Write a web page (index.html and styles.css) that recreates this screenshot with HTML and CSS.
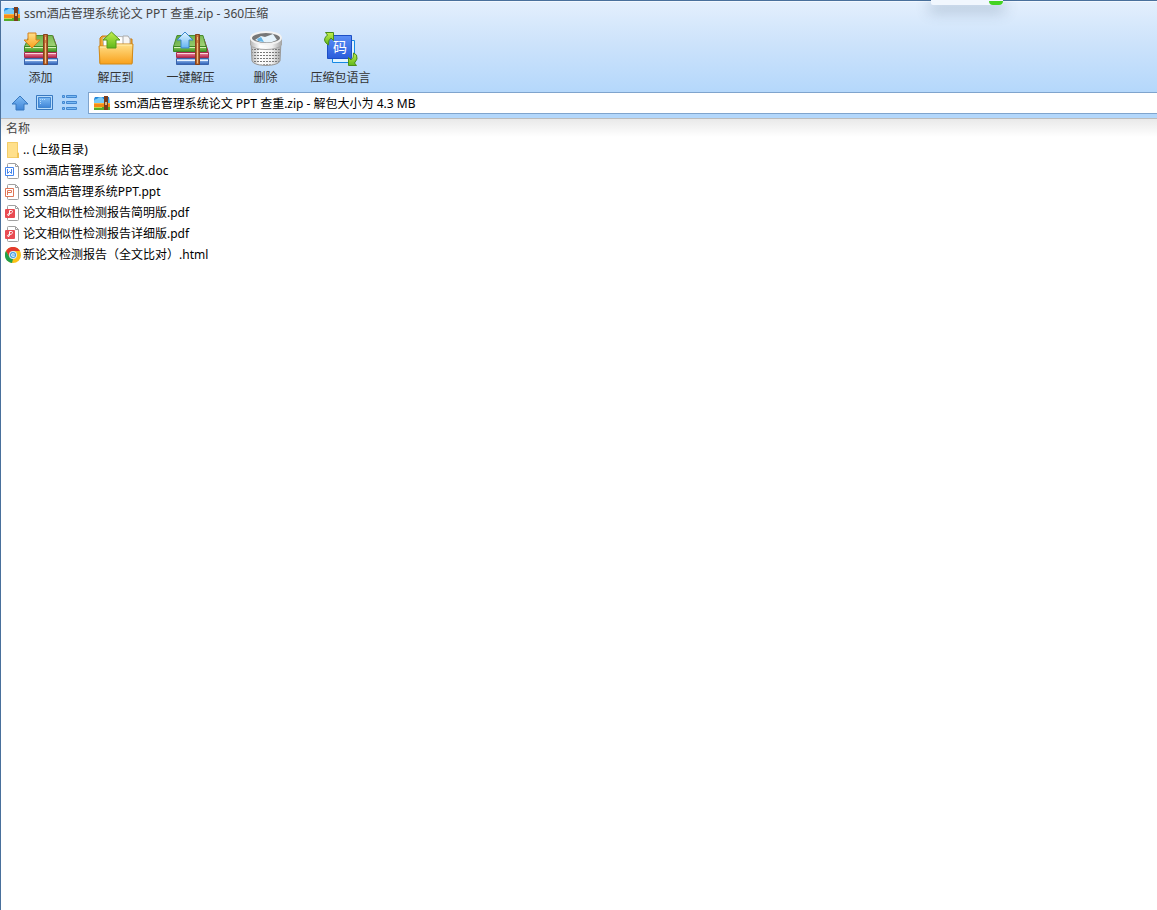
FILE: index.html
```html
<!DOCTYPE html>
<html lang="zh-CN">
<head>
<meta charset="utf-8">
<title>ssm酒店管理系统论文 PPT 查重.zip - 360压缩</title>
<link rel="stylesheet" href="styles.css">
</head>
<body>
<svg class="defs" width="0" height="0" aria-hidden="true">
  <defs>
    <linearGradient id="green" x1="0" y1="0" x2="0" y2="1"><stop offset="0" stop-color="#8cc95c"/><stop offset="1" stop-color="#3f9526"/></linearGradient>
    <linearGradient id="greentop" x1="0" y1="0" x2="1" y2="1"><stop offset="0" stop-color="#5ba53b"/><stop offset="1" stop-color="#a5d67a"/></linearGradient>
    <linearGradient id="red" x1="0" y1="0" x2="0" y2="1"><stop offset="0" stop-color="#f39aae"/><stop offset="1" stop-color="#b62248"/></linearGradient>
    <linearGradient id="blue" x1="0" y1="0" x2="0" y2="1"><stop offset="0" stop-color="#b9d8fb"/><stop offset="1" stop-color="#2459b4"/></linearGradient>
    <linearGradient id="strap" x1="0" y1="0" x2="1" y2="0"><stop offset="0" stop-color="#8c3f16"/><stop offset="0.5" stop-color="#d98645"/><stop offset="1" stop-color="#8c3f16"/></linearGradient>
    <linearGradient id="orange" x1="0" y1="0" x2="0" y2="1"><stop offset="0" stop-color="#ffe08a"/><stop offset="1" stop-color="#f9a11b"/></linearGradient>
    <linearGradient id="lime" x1="0" y1="0" x2="0" y2="1"><stop offset="0" stop-color="#c3ee4e"/><stop offset="1" stop-color="#5fb81a"/></linearGradient>
    <linearGradient id="sky" x1="0" y1="0" x2="0" y2="1"><stop offset="0" stop-color="#e6f6ff"/><stop offset="1" stop-color="#63b4f4"/></linearGradient>
    <linearGradient id="tile" x1="0" y1="0" x2="0" y2="1"><stop offset="0" stop-color="#5c8ff6"/><stop offset="1" stop-color="#2a5ddb"/></linearGradient>
    <linearGradient id="nav" x1="0" y1="0" x2="0" y2="1"><stop offset="0" stop-color="#7fbcf5"/><stop offset="1" stop-color="#3f85d8"/></linearGradient>
    <linearGradient id="metal" x1="0" y1="0" x2="1" y2="0"><stop offset="0" stop-color="#b5b5b5"/><stop offset="0.3" stop-color="#fff"/><stop offset="0.7" stop-color="#f0f0f0"/><stop offset="1" stop-color="#a5a5a5"/></linearGradient>
    <linearGradient id="lid" x1="0" y1="0" x2="0" y2="1"><stop offset="0" stop-color="#1c7fd6"/><stop offset="1" stop-color="#55bdf5"/></linearGradient>
    <pattern id="mesh" width="3" height="3" patternUnits="userSpaceOnUse"><path d="M0 .5h2" stroke="#777"/></pattern>
    <symbol id="books" viewBox="0 0 36 36">
      <path d="M30 4l4 11v17h-5z" fill="#b52a4c"/>
      <path d="M1.500 27.500h33v6h-33z" fill="url(#blue)" stroke="#3a63ab"/>
      <path d="M2 29.500h32" stroke="#eaf3ff"/>
      <path d="M1.500 21.500h32v5h-32z" fill="url(#red)" stroke="#a52c4e"/>
      <path d="M2 22.500h31" stroke="#fbd3dc"/>
      <path d="M6.500 4.500h23l4 11h-32z" fill="url(#greentop)" stroke="#4a8c30"/>
      <path d="M1.500 15.500h32v5h-32z" fill="url(#green)" stroke="#3d8524"/>
      <path d="M2 16.500h31" stroke="#d9f2b8"/>
      <path d="M20.500 3.500h4v30h-4z" fill="url(#strap)" stroke="#86421b"/>
      <path d="M22.500 6v3m0 3v20" stroke="#f3bd80"/>
    </symbol>
    <symbol id="archive" viewBox="0 0 16 14">
      <path d="M1 1h14l1 6H0V3z" fill="url(#lid)"/>
      <path d="M0 6q0-3 3-3 1-2 4-2 2 0 2 2h1v4H0z" fill="#7ccbf6"/>
      <path d="M0 7h16v4H0z" fill="#f58a16"/>
      <path d="M0 7h16v1H0z" fill="#ffb23c"/>
      <path d="M0 11h16v3H0z" fill="#55ab2c"/>
      <path d="M0 11h8v1H0z" fill="#c7dc45"/>
      <path d="M10 0h4v14h-4z" fill="#7a3c1c"/>
      <path d="M11 6h2v3h-2z" fill="#e0b080"/>
    </symbol>
    <symbol id="sheet" viewBox="0 0 16 16">
      <path d="M3.500 .5h7l3 3v11q0 1-1 1h-9q-1 0-1-1v-13q0-1 1-1z" fill="#fff" stroke="#a0a0a0"/>
      <path d="M10.500 1v2.500h3" fill="none" stroke="#a0a0a0"/>
    </symbol>
    <symbol id="pdf" viewBox="0 0 16 16">
      <use href="#sheet"/>
      <rect y="4" width="10" height="9" rx="1" fill="#e94b52"/>
      <path d="M4.500 9V5.500h2q1 0 1 1t-1 1.500L3 9q-1 1 0 1.500t1.500-1.500" fill="none" stroke="#fff"/>
    </symbol>
  </defs>
</svg>
<div class="window">
  <header class="chrome">
    <div class="titlebar">
      <svg class="archive-icon" aria-hidden="true"><use href="#archive"/></svg>
      <h1 class="title">ssm酒店管理系统论文 PPT 查重.zip - 360压缩</h1>
    </div>
    <div class="toolbar">
      <button class="tool" type="button">
        <svg class="tool-icon" viewBox="0 0 36 36" aria-hidden="true"><use href="#books"/><path d="M5 2h8v7h4l-8 8-8-8h4z" fill="url(#orange)" stroke="#d5801c"/></svg>
        <span>添加</span>
      </button>
      <button class="tool" type="button">
        <svg class="tool-icon" viewBox="0 0 36 36" aria-hidden="true">
          <path d="M2 7l2-2h8l2 3h20v24H2z" fill="#f2a62e" stroke="#c77b14"/>
          <path d="M5 7l11-3 2 16H6zM16 5l12 1v14H15z" fill="#fff" stroke="#b9b9b9"/>
          <path d="M25 5h5l2 3v12h-7z" fill="#f6f6f6" stroke="#aaa"/>
          <path d="M1 15h13l3-2h18l-1 20H2z" fill="url(#orange)" stroke="#d28a18"/>
          <path d="M2 16h12l3-2h17" fill="none" stroke="#fff1b5"/>
          <path d="M13.500 1L22 9h-4v8H9V9H5z" fill="url(#lime)" stroke="#55971a"/>
        </svg>
        <span>解压到</span>
      </button>
      <button class="tool" type="button">
        <svg class="tool-icon" viewBox="0 0 36 36" aria-hidden="true">
          <path d="M31 8l4 12v13h-5z" fill="#c13b5c" stroke="#a52c4e"/>
          <path d="M3.500 27.500h32v6h-32z" fill="url(#blue)" stroke="#3a63ab"/><path d="M4 29.500h31" stroke="#eaf3ff"/>
          <path d="M3.500 21.500h32v5h-32z" fill="url(#red)" stroke="#a52c4e"/><path d="M4 22.500h31" stroke="#fbd3dc"/>
          <path d="M4 4.500h26l3 11H.5z" fill="url(#greentop)" stroke="#4a8c30"/><path d="M.5 15.500h33v5H.5z" fill="url(#green)" stroke="#3d8524"/><path d="M1 16.500h32" stroke="#d9f2b8"/>
          <path d="M22.500 3.500h4v30h-4z" fill="url(#strap)" stroke="#86421b"/><path d="M24.500 6v3m0 3v20" stroke="#f3bd80"/>
          <path d="M12 1l8 8h-4v8H8V9H4z" fill="url(#sky)" stroke="#3b87cc"/>
        </svg>
        <span>一键解压</span>
      </button>
      <button class="tool" type="button">
        <svg class="tool-icon" viewBox="0 0 36 36" aria-hidden="true">
          <path d="M3 10l1 20c2 6 26 6 28 0l1-20z" fill="url(#metal)" stroke="#999"/>
          <path d="M4 16l1 14c2 5 24 5 26 0l1-14q-14 6-28 0z" fill="url(#mesh)"/>
          <path d="M2.500 7v7c3 6 28 6 31 0V7z" fill="url(#metal)" stroke="#a5a5a5"/>
          <ellipse cx="18" cy="7" rx="15" ry="6" fill="#777" stroke="#f2f2f2" stroke-width="2"/>
          <path d="M7 9l6-4 4 1 8-3 4 6q-10 5-22 0z" fill="#e5f3fc"/><path d="M9 8l4-2 3 5-6-1z" fill="#65b4e5"/>
        </svg>
        <span>删除</span>
      </button>
      <button class="tool" type="button">
        <svg class="tool-icon" viewBox="0 0 36 36" aria-hidden="true">
          <path d="M9.500 9.500h22v22h-22z" fill="#e2f5ff" stroke="#1689e4"/>
          <path d="M4.500 4.500h24v23h-24z" fill="url(#tile)" stroke="#1d4fc5"/>
          <text class="tile-char" x="17" y="21">码</text>
          <path d="M2.500 1.500h8v8L8 7q-3 2-2.500 7L3 12Q-.5 8 4.500 4z" fill="url(#lime)" stroke="#4b8d18"/>
          <path d="M33.500 34.500h-8v-8l2.500 2.500q3-2 2.500-7l3 2q2 4-2 8z" fill="url(#lime)" stroke="#4b8d18"/>
        </svg>
        <span>压缩包语言</span>
      </button>
    </div>
    <div class="pathbar">
      <button class="nav" type="button" aria-label="向上"><svg viewBox="0 0 18 16" aria-hidden="true"><path d="M9 1l8 8h-4v6H5V9H1z" fill="url(#nav)" stroke="#3979c0"/></svg></button>
      <button class="nav" type="button" aria-label="预览"><svg viewBox="0 0 18 16" aria-hidden="true"><path d="M.5 .5h16v14H.5z" fill="#b9dcfb" stroke="#3979c0"/><path d="M2.500 2.500h12v10h-12z" fill="url(#nav)" stroke="#3f85d0"/><path d="M4.500 9V4.500H9" fill="none" stroke="#b9dcfb" stroke-dasharray="1 1"/></svg></button>
      <button class="nav" type="button" aria-label="列表"><svg viewBox="0 0 18 16" aria-hidden="true"><path d="M1.500 .5h2v2h-2zM1.500 6.500h2v2h-2zM1.500 12.500h2v2h-2zM5.500 .5h10v2h-10zM5.500 6.500h10v2h-10zM5.500 12.500h10v2h-10z" fill="#78b9f3" stroke="#4387d0"/></svg></button>
      <label class="path">
        <svg class="archive-icon" aria-hidden="true"><use href="#archive"/></svg>
        <input class="path-input" type="text" aria-label="路径" value="ssm酒店管理系统论文 PPT 查重.zip - 解包大小为 4.3 MB">
      </label>
    </div>
    <div class="float" aria-hidden="true"><span class="float-dot"></span></div>
  </header>
  <main class="listing">
    <table class="files">
      <thead><tr><th scope="col">名称</th></tr></thead>
      <tbody>
        <tr><td><a class="file" href="#"><svg class="file-icon" viewBox="0 0 16 16" aria-hidden="true"><path d="M2 0h11v10l1 1v5H2z" fill="#ffe08b"/><path d="M2.500 .5h10v15h-10z" fill="none" stroke="#f3cd69"/><path d="M12 11h2v5h-2z" fill="#f0c457"/></svg>.. (上级目录)</a></td></tr>
        <tr><td><a class="file" href="#"><svg class="file-icon" viewBox="0 0 16 16" aria-hidden="true"><use href="#sheet"/><path d="M.5 4.500h8v8h-8z" fill="#fff" stroke="#4485ed"/><path d="M2.500 6v4.500l2-2 2 2V6" fill="none" stroke="#4485ed"/></svg>ssm酒店管理系统 论文.doc</a></td></tr>
        <tr><td><a class="file" href="#"><svg class="file-icon" viewBox="0 0 16 16" aria-hidden="true"><use href="#sheet"/><path d="M.5 4.500h8v8h-8z" fill="#fff" stroke="#df7656"/><path d="M2.500 11V6.500h4v2h-4" fill="none" stroke="#df7656"/></svg>ssm酒店管理系统PPT.ppt</a></td></tr>
        <tr><td><a class="file" href="#"><svg class="file-icon" aria-hidden="true"><use href="#pdf"/></svg>论文相似性检测报告简明版.pdf</a></td></tr>
        <tr><td><a class="file" href="#"><svg class="file-icon" aria-hidden="true"><use href="#pdf"/></svg>论文相似性检测报告详细版.pdf</a></td></tr>
        <tr><td><a class="file" href="#"><svg class="file-icon" viewBox="0 0 16 16" aria-hidden="true"><circle cx="8" cy="8" r="8" fill="#fbc116"/><path d="M1 4a8 8 0 0 1 14 0H8L4.500 10z" fill="#e33b2e"/><path d="M1 4l3.500 6L8 12l-1 4A8 8 0 0 1 1 4z" fill="#20a04b"/><circle cx="8" cy="8" r="4" fill="#dcecf8"/><circle cx="8" cy="8" r="3" fill="#3f9ae0"/><path d="M6 8h4M9.500 9.500q-3 1-3-1.500t3-1" fill="none" stroke="#dcecf8"/></svg>新论文检测报告（全文比对）.html</a></td></tr>
      </tbody>
    </table>
  </main>
</div>
</body>
</html>
```
FILE: styles.css
```css
* {
  box-sizing: border-box;
}

body {
  margin: 0;
  font: 12px/16px "Noto Sans", "Noto Sans CJK SC", sans-serif;
  color: #000;
  background: #fff;
}

button,
input {
  font: inherit;
  color: inherit;
  margin: 0;
  padding: 0;
  border: 0;
  background: none;
}

svg {
  display: block;
  flex: none;
}

.defs {
  position: absolute;
}

.window {
  display: flex;
  flex-direction: column;
  min-height: 100vh;
  border-top: 1px solid #49709c;
  border-left: 1px solid #49709c;
}

.chrome {
  position: relative;
  border-top: 1px solid #f2f8ff;
  border-bottom: 1px solid #bcbcbc;
  background: linear-gradient(#e3effd, #cde3fb 35%, #b3d7fb 80%);
}

.titlebar {
  display: flex;
  align-items: center;
  gap: 4px;
  height: 24px;
  padding-left: 3px;
}

.archive-icon {
  width: 16px;
  height: 14px;
}

.title {
  margin: 0;
  font-size: 12px;
  font-weight: 400;
  color: #444;
}

.toolbar {
  display: flex;
  padding: 5px 2px 6px;
}

.tool {
  display: flex;
  flex-direction: column;
  align-items: center;
  gap: 3px;
  width: 75px;
  color: #333;
  white-space: nowrap;
}

.tool-icon {
  width: 36px;
  height: 36px;
}

.tile-char {
  font-size: 14px;
  fill: #fff;
  text-anchor: middle;
}

.pathbar {
  display: flex;
  align-items: center;
  gap: 7px;
  padding: 0 0 4px 10px;
}

.nav svg {
  width: 18px;
  height: 16px;
}

.path {
  display: flex;
  flex: 1;
  align-items: center;
  gap: 4px;
  height: 22px;
  margin-left: 2px;
  padding-left: 5px;
  border: 1px solid #7fa4cd;
  border-right: 0;
  background: #fff;
}

.path-input {
  flex: 1;
  height: 20px;
  outline: 0;
}

.float {
  position: absolute;
  top: -2px;
  right: 154px;
  width: 72px;
  height: 5px;
  border-radius: 0 0 2px 2px;
  background: #f1f7fe;
  box-shadow: 0 5px 14px 2px rgba(60, 90, 120, 0.3);
  clip-path: inset(0 -24px -24px);
}

.float-dot {
  position: absolute;
  right: 0;
  bottom: 0;
  width: 14px;
  height: 4px;
  border-radius: 0 0 7px 7px;
  background: #43d321;
}

.listing {
  flex: 1;
  background: linear-gradient(#e9e9e9, #fff 18px);
}

.files {
  width: 100%;
  border-collapse: collapse;
}

.files th {
  height: 20px;
  padding: 0 5px;
  font-weight: 400;
  text-align: left;
  color: #444;
}

.files td {
  height: 21px;
  padding: 0 4px;
}

.file {
  display: flex;
  align-items: center;
  gap: 2px;
  color: #000;
  text-decoration: none;
}

.file-icon {
  width: 16px;
  height: 16px;
}
```
